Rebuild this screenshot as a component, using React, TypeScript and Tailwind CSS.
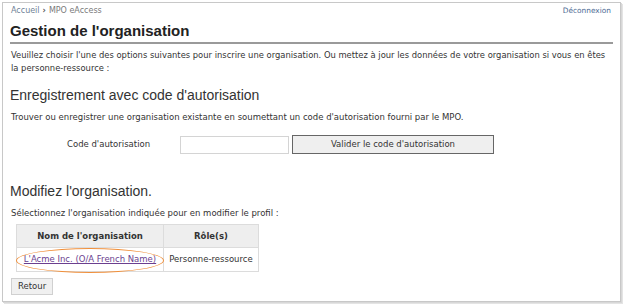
export default function App() {
  const body = { fontFamily: '"DejaVu Sans", Verdana, sans-serif' };
  const head = { fontFamily: '"Liberation Sans", Arial, sans-serif' };
  return (
    <div className="w-[624px] h-[305px] bg-white p-[2px]">
      <div
        className="w-[619px] h-[300px] border border-[#c8c8c8] shadow-[1px_1px_0_#d8d8d8,2px_2px_0_#e4e4e4] bg-white px-[7px] pt-[3px] text-[#333]"
        style={body}
      >
        {/* Top bar */}
        <div className="flex justify-between items-center h-[10px] pl-[1px] pr-[2px]">
          <div className="flex items-center text-[8px] text-[#6f7f96]">
            <span>Accueil</span>
            <span className="mx-[3px] text-[#555] font-bold">›</span>
            <span className="text-[#7a7a7a]">MPO eAccess</span>
          </div>
          <div className="text-[#4d6a94] text-[7.4px]">Déconnexion</div>
        </div>

        <h1 className="text-[15px] leading-[20px] font-bold text-[#222] mt-[5px] pb-[1px] border-b-2 border-[#9a9a9a]" style={head}>
          Gestion de l'organisation
        </h1>

        <p className="text-[8.4px] leading-[13px] mt-[5px] pl-[1px]">
          Veuillez choisir l'une des options suivantes pour inscrire une organisation. Ou mettez à jour les données de votre organisation si vous en êtes la personne-ressource :
        </p>

        <h2 className="text-[14px] leading-[18px] text-[#333] mt-[11px]" style={head}>
          Enregistrement avec code d'autorisation
        </h2>
        <p className="text-[8.5px] leading-[12px] mt-[7px] pl-[1px]">
          Trouver ou enregistrer une organisation existante en soumettant un code d'autorisation fourni par le MPO.
        </p>

        <div className="flex items-center mt-[12px]">
          <div className="w-[170px] pl-[57px] text-[8.5px]">Code d'autorisation</div>
          <div className="w-[109px] h-[18px] border border-[#d4d4d4] bg-white" />
          <button className="ml-[3px] w-[202px] h-[19px] border border-[#666] bg-[#efefef] text-[8.5px] text-[#333]">
            Valider le code d'autorisation
          </button>
        </div>

        <h2 className="text-[14px] leading-[18px] text-[#333] mt-[28px]" style={head}>
          Modifiez l'organisation.
        </h2>
        <p className="text-[8.5px] leading-[12px] mt-[7px] pl-[1px]">
          Sélectionnez l'organisation indiquée pour en modifier le profil :
        </p>

        <table className="mt-[5px] ml-[6px] border-collapse text-[8.5px]">
          <thead>
            <tr className="bg-[#eeeeee] h-[23px]">
              <th className="border border-[#dcdcdc] w-[147px] font-bold">Nom de l'organisation</th>
              <th className="border border-[#dcdcdc] w-[95px] font-bold">Rôle(s)</th>
            </tr>
          </thead>
          <tbody>
            <tr className="h-[24px]">
              <td className="border border-[#dcdcdc] text-center relative">
                <span className="text-[#6b3f8f] underline">L'Acme Inc. (O/A French Name)</span>
                <span className="absolute left-[-1px] top-[0px] w-[148px] h-[25px] rounded-[50%] border-[1.5px] border-[#f0903c]" />
              </td>
              <td className="border border-[#dcdcdc] text-center">Personne-ressource</td>
            </tr>
          </tbody>
        </table>

        <button className="mt-[6px] ml-[1px] px-[6px] h-[17px] border border-[#d0d0d0] bg-[#f0f0f0] text-[8.5px] text-[#333]">
          Retour
        </button>
      </div>
    </div>
  );
}
